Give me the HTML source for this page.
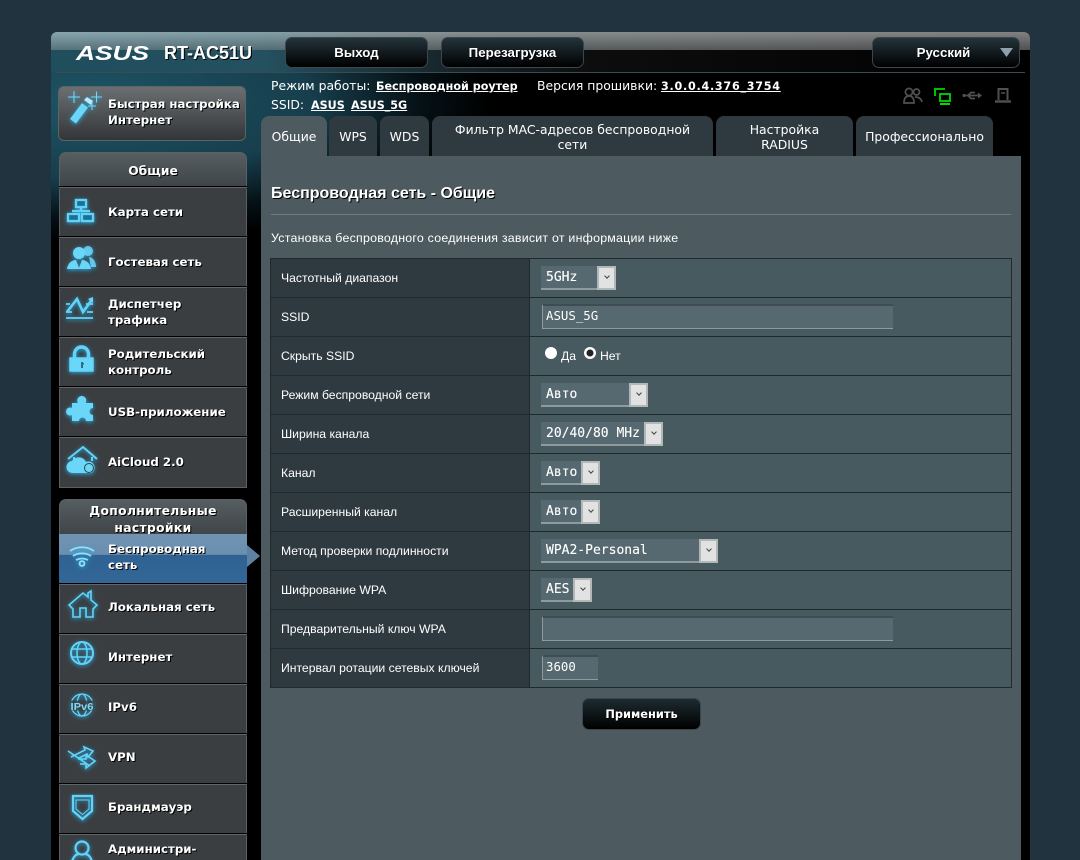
<!DOCTYPE html>
<html lang="ru"><head><meta charset="utf-8"><title>ASUS RT-AC51U</title>
<style>
html,body{margin:0;padding:0;background:#21333e;width:1080px;height:860px;overflow:hidden}
body{position:relative;font-family:"DejaVu Sans",sans-serif;color:#fff}
.a{position:absolute}
#frame{left:51px;top:32px;width:979px;height:840px;background:#000;border-radius:6px 6px 0 0;overflow:hidden}
#glow{left:0;top:40px;width:979px;height:210px;background:radial-gradient(ellipse 400px 140px at 40px 30px,#1d5566 0,#173e4c 55%,rgba(8,25,32,.7) 82%,rgba(0,0,0,0) 100%)}
#band{left:0;top:0;width:979px;height:40px;background:linear-gradient(90deg,#1f4e5d 0,#24505f 22%,#182a30 38%,#0d0d0d 55%,#000 100%)}
#bandTop{left:0;top:0;width:979px;height:18px;background:linear-gradient(rgba(255,255,255,.18),rgba(0,0,0,.22)),linear-gradient(90deg,#6f929c 0,#6a8a94 22%,#6e7678 42%,#666 100%)}
#line{left:5px;top:40px;width:969px;height:1px;background:#3b4b55}
.topbtn{height:31px;top:37px;box-sizing:border-box;border:1px solid #3b474d;border-radius:7px;background:linear-gradient(#24343b,#000);font-weight:bold;font-size:13.3px;text-align:center;line-height:29px;font-family:"Liberation Sans",sans-serif;text-shadow:1px 1px 0 #000}
.side{font-family:"DejaVu Sans",sans-serif;font-weight:bold;font-size:11.8px;line-height:16px;text-shadow:1px 1px 0 #000;color:#fff;white-space:nowrap}
.panel{background:#3a3e41;border:1px solid #5a6063;box-sizing:border-box}
.head{background:linear-gradient(#565e62,#3f4549);border-radius:7px 7px 0 0;border:1px solid #5a6063;border-bottom:none;box-sizing:border-box;text-align:center;font-weight:bold;font-size:12.3px;line-height:18px;text-shadow:1px 1px 0 #000}
.sep{left:59px;width:188px;height:3px;background:linear-gradient(#000 0,#000 33%,#5f6568 34%,#5f6568 66%,#3a3e41 67%)}
.tab{top:116px;height:40px;background:#2f3a40;border-radius:8px 8px 0 0;text-align:center;font-size:12.4px;line-height:15px;color:#fff;display:flex;align-items:center;justify-content:center;font-family:"DejaVu Sans",sans-serif}
#content{left:261px;top:156px;width:760px;height:704px;background:#4d5a60}
.lab{left:281px;font-family:"Liberation Sans",sans-serif;font-size:12.2px;color:#fff;line-height:14px;white-space:nowrap}
.row{left:270px;width:742px;height:1px;background:#20292d}
.sel{height:24px;background:#566970;border-bottom:2px solid #8f9a9e;box-sizing:border-box;font-family:"DejaVu Sans Mono","Liberation Mono",monospace;font-size:13px;line-height:24px;padding-left:5px;color:#fff;white-space:pre;-webkit-text-stroke:.12px #fff}
.arr{position:absolute;right:0;top:0;width:19px;height:24px;background:#e2e2e2;border:2px solid #b2b8b8;box-sizing:border-box}
.arr:after{content:"";position:absolute;left:5.500px;top:5.500px;width:3px;height:3px;border-right:1.5px solid #444;border-bottom:1.5px solid #444;transform:rotate(45deg)}
.inp{height:25px;background:#566970;border:1px solid #8f9a9e;border-top:2px solid #3f4c52;border-right:none;box-sizing:border-box;font-family:"DejaVu Sans Mono","Liberation Mono",monospace;font-size:12.400px;line-height:20px;padding-left:3px;color:#fff;white-space:pre}
.u{text-decoration:underline;font-weight:bold;font-family:"DejaVu Sans",sans-serif;font-size:11.15px}
.info{font-family:"DejaVu Sans",sans-serif;font-size:12.4px;line-height:16px;color:#fff;white-space:pre}
</style></head><body>
<div class="a" id="frame">
<div class="a" id="glow"></div><div class="a" id="band"></div><div class="a" id="bandTop"></div><div class="a" id="line"></div>
</div>

<svg class="a" style="left:70px;top:40px" width="85" height="26"><text x="6" y="20" font-family="Liberation Sans" font-weight="bold" font-style="italic" font-size="20" fill="#fff" textLength="73" lengthAdjust="spacingAndGlyphs">ASUS</text></svg>
<div class="a" style="left:164px;top:43px;font:bold 18px 'Liberation Sans',sans-serif;text-shadow:1px 1px 0 #000">RT-AC51U</div>

<div class="a topbtn" style="left:285px;width:143px">Выход</div>
<div class="a topbtn" style="left:441px;width:143px">Перезагрузка</div>
<div class="a topbtn" style="left:872px;width:148px;padding-right:5px">Русский</div>
<svg class="a" style="left:1000px;top:48px" width="14" height="10"><path d="M0 0H13L6.500 9Z" fill="#8fa0ab"/></svg>

<div class="a info" style="left:271px;top:78px">Режим работы:</div>
<div class="a info" style="left:376px;top:78px"><span class="u">Беспроводной роутер</span></div>
<div class="a info" style="left:537px;top:78px">Версия прошивки:</div>
<div class="a info" style="left:661px;top:78px"><span class="u" style="letter-spacing:.75px">3.0.0.4.376_3754</span></div>
<div class="a info" style="left:271px;top:97px">SSID:</div>
<div class="a info" style="left:311px;top:97px"><span class="u">ASUS</span></div>
<div class="a info" style="left:351px;top:97px"><span class="u">ASUS_5G</span></div>

<!-- quick setup -->
<div class="a" style="left:58px;top:86px;width:188px;height:55px;box-sizing:border-box;border:1px solid #5e6366;border-radius:6px;background:linear-gradient(#6b6f71,#333638)"></div>
<div class="a side" style="left:108px;top:96px;font-size:11.75px">Быстрая настройка<br>Интернет</div>

<!-- General panel -->
<div class="a head" style="left:59px;top:152px;width:188px;height:34px;line-height:36px">Общие</div>
<div class="a panel" style="left:59px;top:186px;width:188px;height:302px"></div>
<div class="a sep" style="top:186px"></div><div class="a sep" style="top:236px"></div><div class="a sep" style="top:286px"></div><div class="a sep" style="top:336px"></div><div class="a sep" style="top:386px"></div><div class="a sep" style="top:436px"></div>
<div class="a side" style="left:108px;top:204px">Карта сети</div>
<div class="a side" style="left:108px;top:254px">Гостевая сеть</div>
<div class="a side" style="left:108px;top:296px">Диспетчер<br>трафика</div>
<div class="a side" style="left:108px;top:346px">Родительский<br>контроль</div>
<div class="a side" style="left:108px;top:404px">USB-приложение</div>
<div class="a side" style="left:108px;top:454px">AiCloud 2.0</div>

<!-- Advanced panel -->
<div class="a head" style="left:59px;top:499px;width:188px;height:35px;line-height:17px;padding-top:3px;overflow:hidden;letter-spacing:.35px">Дополнительные настройки</div>
<div class="a panel" style="left:59px;top:534px;width:188px;height:340px"></div>
<div class="a" style="left:59px;top:534px;width:188px;height:49px;background:linear-gradient(#7093b3 0,#6b8fae 42%,#2f6292 43%,#336797 100%)"></div>
<svg class="a" style="left:247px;top:545px" width="14" height="22"><path d="M0 0L13 11L0 22Z" fill="#5d82a1"/></svg>
<div class="a sep" style="top:583px"></div><div class="a sep" style="top:633px"></div><div class="a sep" style="top:683px"></div><div class="a sep" style="top:733px"></div><div class="a sep" style="top:783px"></div><div class="a sep" style="top:833px"></div>
<div class="a side" style="left:108px;top:541px">Беспроводная<br>сеть</div>
<div class="a side" style="left:108px;top:599px">Локальная сеть</div>
<div class="a side" style="left:108px;top:649px">Интернет</div>
<div class="a side" style="left:108px;top:699px">IPv6</div>
<div class="a side" style="left:108px;top:749px">VPN</div>
<div class="a side" style="left:108px;top:799px">Брандмауэр</div>
<div class="a side" style="left:108px;top:841px">Администри-</div>

<!-- tabs -->
<div class="a tab" style="left:261px;width:66px;background:#4d5a60">Общие</div>
<div class="a tab" style="left:329px;width:48px">WPS</div>
<div class="a tab" style="left:380px;width:49px">WDS</div>
<div class="a tab" style="left:432px;width:281px;padding:2px 10px 0;box-sizing:border-box">Фильтр MAC-адресов беспроводной<br>сети</div>
<div class="a tab" style="left:716px;width:137px;padding-top:2px;box-sizing:border-box">Настройка<br>RADIUS</div>
<div class="a tab" style="left:856px;width:137px">Профессионально</div>

<div class="a" id="content"></div>
<div class="a" style="left:271px;top:185px;font:bold 16px 'Liberation Sans',sans-serif;text-shadow:1px 1px 0 #000">Беспроводная сеть - Общие</div>
<div class="a" style="left:271px;top:214px;width:740px;height:1px;background:#727c80"></div>
<div class="a" style="left:271px;top:231px;font:12.4px 'Liberation Sans',sans-serif;letter-spacing:.23px;white-space:nowrap">Установка беспроводного соединения зависит от информации ниже</div>

<!-- table -->
<div class="a" style="left:270px;top:258px;width:260px;height:430px;background:#2f3a40"></div>
<div class="a" style="left:530px;top:258px;width:482px;height:430px;background:#475a60"></div>
<div class="a" style="left:270px;top:258px;width:742px;height:430px;border:1px solid #20292d;box-sizing:border-box"></div>
<div class="a" style="left:529px;top:258px;width:1px;height:430px;background:#20292d"></div>
<div class="a row" style="top:297px"></div><div class="a row" style="top:336px"></div><div class="a row" style="top:375px"></div><div class="a row" style="top:414px"></div><div class="a row" style="top:453px"></div><div class="a row" style="top:492px"></div><div class="a row" style="top:531px"></div><div class="a row" style="top:570px"></div><div class="a row" style="top:609px"></div><div class="a row" style="top:648px"></div>

<div class="a lab" style="top:271px">Частотный диапазон</div>
<div class="a lab" style="top:310px">SSID</div>
<div class="a lab" style="top:349px">Скрыть SSID</div>
<div class="a lab" style="top:388px">Режим беспроводной сети</div>
<div class="a lab" style="top:427px">Ширина канала</div>
<div class="a lab" style="top:466px">Канал</div>
<div class="a lab" style="top:505px">Расширенный канал</div>
<div class="a lab" style="top:544px">Метод проверки подлинности</div>
<div class="a lab" style="top:583px">Шифрование WPA</div>
<div class="a lab" style="top:622px">Предварительный ключ WPA</div>
<div class="a lab" style="top:661px">Интервал ротации сетевых ключей</div>

<div class="a sel" style="left:541px;top:266px;width:75px">5GHz<span class="arr"></span></div>
<div class="a inp" style="left:542px;top:304px;width:351px">ASUS_5G</div>
<svg class="a" style="left:544px;top:346px" width="16" height="16"><circle cx="7" cy="7" r="6" fill="#fff"/></svg>
<div class="a lab" style="left:561px;top:349px">Да</div>
<svg class="a" style="left:583px;top:346px" width="16" height="16"><circle cx="7" cy="7" r="6" fill="#fff"/><circle cx="7" cy="7" r="3.500" fill="#222"/></svg>
<div class="a lab" style="left:600px;top:349px">Нет</div>
<div class="a sel" style="left:541px;top:383px;width:107px">Авто<span class="arr"></span></div>
<div class="a sel" style="left:541px;top:422px;width:122px">20/40/80 MHz<span class="arr"></span></div>
<div class="a sel" style="left:541px;top:461px;width:59px">Авто<span class="arr"></span></div>
<div class="a sel" style="left:541px;top:500px;width:59px">Авто<span class="arr"></span></div>
<div class="a sel" style="left:541px;top:539px;width:177px">WPA2-Personal<span class="arr"></span></div>
<div class="a sel" style="left:541px;top:578px;width:51px">AES<span class="arr"></span></div>
<div class="a inp" style="left:542px;top:616px;width:351px"></div>
<div class="a inp" style="left:542px;top:655px;width:56px">3600</div>

<div class="a topbtn" style="left:582px;top:698px;width:119px;height:32px;font:bold 11.400px/31px 'DejaVu Sans',sans-serif;background:linear-gradient(#1e2b31,#000);border-color:#3a464c">Применить</div>

<svg class="a" style="left:0;top:0" width="1080" height="860" fill="none">
<!-- status icons -->
<g stroke="#505050" stroke-width="1.700">
<circle cx="909" cy="92" r="3.600"/><circle cx="916.500" cy="92" r="3"/><path d="M904 103c0-5 2-7 5-7s5 2 5 7ZM915 97c3 0 6 1 7 5"/>
<path d="M965 95.500h14M968 95.500l3-3h4M968 95.500l3 3h4"/>
<circle cx="964" cy="95.500" r="1.600" fill="#505050" stroke="none"/><path d="M978 92.500l4 3-4 3Z" fill="#505050" stroke="none"/>
<path d="M998.500 100V89h9v11" stroke-width="2"/><path d="M995 101.500h16" stroke-width="2.400"/><path d="M1001 93h4" stroke-width="1.500"/>
</g>
<g stroke="#00d800" stroke-width="1.800"><path d="M935 96v-7h10"/><rect x="940" y="94" width="10" height="7"/><path d="M940 104h10" stroke-width="2"/></g>

<defs><filter id="g" x="-40%" y="-40%" width="180%" height="180%"><feDropShadow dx="0" dy="1" stdDeviation="2.200" flood-color="#27a9e0" flood-opacity="1"/></filter></defs>
<g filter="url(#g)" stroke="#62d3f7" fill="#6bd6f8" stroke-width="1.500">
 <!-- wand -->
 <path d="M70 119l12-16 6 4.500-12 16Z" stroke="none"/><path d="M84 100l3-3 6 4-2 4Z" stroke="none" fill="#b4ecfc"/>
 <path d="M68 97h12M74 91v12M91 97h11M96.500 91.500v11M88 106h8M92 102v8" stroke="#73d9f8" stroke-width="1"/>
 <!-- map -->
 <g fill="#1f6f92" stroke-width="2.300"><rect x="76" y="200" width="10" height="7"/><path d="M81 207v4M72 211h18"/><rect x="68" y="214" width="11" height="7"/><rect x="82" y="214" width="11" height="7"/></g>
 <!-- guest -->
 <circle cx="88" cy="251" r="5" stroke="none" opacity=".85"/><path d="M89 257c4 0 7 5 7 10h-5Z" stroke="none" opacity=".85"/><circle cx="79" cy="253" r="6" stroke="none"/><path d="M67 269c1-6 5-9 9-9l3 8 3-8c4 0 8 3 9 9Z" stroke="none"/>
 <!-- traffic -->
 <path d="M67 312l10-13 6 13 8-11" fill="none" stroke-width="2.600"/><path d="M88 299l5-2v6Z" stroke="none"/><path d="M66 312h6M87 312h6M66 318h27M66 304h4M86 304h7" fill="none" stroke-width="1.800"/>
 <!-- lock -->
 <path d="M70 358h23v13H70Z" stroke-linejoin="round"/><path d="M74.500 358v-4a7 7 0 0 1 14 0v4" fill="none" stroke-width="3.400"/>
 <!-- puzzle -->
 <path d="M72 403h6a4.500 4.500 0 1 1 7.500 0h7.500v5a3.500 3.500 0 1 0 0 7v6h-7a3.500 3.500 0 1 0-7 0h-7v-6a4 4 0 1 1 0-7Z" stroke="none"/>
 <!-- cloud -->
 <path d="M68 459l15-12 14 12M74 457v5M92 457v4" fill="none" stroke-width="2"/><path d="M73 473a6 6 0 0 1-1-12a8 8 0 0 1 14 1a5 5 0 0 1 5 11Z" stroke="none"/><circle cx="89" cy="468" r="4.500" stroke="#3a3e41" stroke-width="1"/>
 <!-- wifi -->
 <g fill="none" stroke="#8fe0fa" stroke-width="1.800"><path d="M70 551c7-5 17-5 24 0M73 556c5-3.500 13-3.500 18 0M76 560c4-2 8-2 12 0"/><circle cx="82" cy="563.500" r="2.400"/></g>
 <!-- home -->
 <path d="M73 617V609L69 605L83 593L88 597V593L91 591V600L97 605L93 609V617H86V608H80V617Z" fill="none" stroke-width="1.600"/>
 <!-- globe -->
 <g fill="none" stroke-width="2"><circle cx="82" cy="653" r="11"/><ellipse cx="82" cy="653" rx="5" ry="11" stroke-width="1.500"/><path d="M72 649h20M72 657h20" stroke-width="1.500"/></g>
 <!-- ipv6 -->
 <g fill="none" stroke-width="1.300"><circle cx="82" cy="705" r="11"/><ellipse cx="82" cy="705" rx="5" ry="11"/></g>
 <!-- vpn -->
 <path d="M68 751L90 766M71 757L85 750L84 747L93 751L88 757L87 754L79 758M78 759H86V755L95 761L86 768V764H80" fill="none" stroke-width="1.600"/>
 <!-- shield -->
 <path d="M73 796h19v15l-9.500 8-9.500-8Z" fill="none" stroke-width="2.200"/><path d="M76 800h13v9l-6.500 5.500-6.500-5.500Z" fill="none" stroke-width="1"/>
 <!-- admin -->
 <circle cx="82" cy="848" r="6.500" fill="none" stroke-width="2.200"/><path d="M72 862c1-5 4-8 7-8M92 862c-1-5-4-8-7-8" fill="none" stroke-width="2.200"/>
</g>
<rect x="70" y="700.500" width="24" height="10" fill="#3a3e41" opacity=".8"/>
<text x="70.500" y="710" font-family="Liberation Sans" font-size="10.500" font-weight="bold" fill="#7adcf9" textLength="23" lengthAdjust="spacingAndGlyphs">IPv6</text>
<rect x="81" y="362" width="2" height="6" fill="#2f6d85"/><rect x="82" y="363" width="2" height="1.500" fill="#2f6d85"/>
</svg>
</body></html>
